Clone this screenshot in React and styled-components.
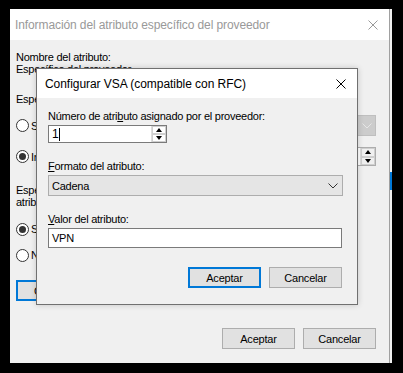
import React from "react";
import styled, { createGlobalStyle } from "styled-components";

const Global = createGlobalStyle`
  html, body { margin: 0; padding: 0; background: #000; }
  body { width: 403px; height: 373px; overflow: hidden; }
  * { box-sizing: border-box; }
`;

const UI = `"Liberation Sans", Arial, sans-serif`;

const Page = styled.div`
  display: flex;
  align-items: flex-start;
  padding: 9px 0 0 10px;
  height: 373px;
`;

const Window = styled.div`
  position: relative;
  width: 379px;
  height: 354px;
  background: #f0f0f0;
  display: flex;
  flex-direction: column;
`;

const EdgeStrip = styled.div`
  width: 3px;
  height: 354px;
  border-left: 1px solid #a0a0a0;
  background: #f0f0f0;
  display: flex;
  flex-direction: column;
`;

const EdgeMark = styled.div`
  margin-top: ${(p) => p.$top}px;
  height: ${(p) => p.$h}px;
  background: ${(p) => p.$color};
`;

const TitleBar = styled.div`
  height: ${(p) => p.$h}px;
  flex: none;
  background: #fff;
  display: flex;
  align-items: center;
  justify-content: space-between;
  padding-left: ${(p) => p.$pad}px;
  font-family: ${UI};
  font-size: 12px;
  letter-spacing: ${(p) => (p.$active ? "-0.05px" : "-0.1px")};
  color: ${(p) => (p.$active ? "#000" : "#999")};
`;

const CloseBox = styled.div`
  width: 32px;
  height: 100%;
  display: flex;
  align-items: center;
  justify-content: center;
`;

const Content = styled.div`
  flex: 1;
  display: flex;
  flex-direction: column;
  padding: 11px 13px 14px 6px;
  font-family: ${UI};
  font-size: 11px;
  letter-spacing: -0.25px;
  color: #000;
`;

const Lines = styled.div`
  line-height: 12px;
  margin-top: ${(p) => p.$mt || 0}px;
  white-space: nowrap;
`;

const OptionRow = styled.div`
  display: flex;
  align-items: center;
  height: ${(p) => p.$h}px;
  margin-top: ${(p) => p.$mt}px;
  white-space: nowrap;
`;

const Radio = styled.span`
  width: 13px;
  height: 13px;
  border-radius: 50%;
  border: 1px solid #333;
  background: #fff;
  display: inline-flex;
  align-items: center;
  justify-content: center;
  margin-right: 2px;
  flex: none;
  &::after {
    content: "";
    width: 7px;
    height: 7px;
    border-radius: 50%;
    background: ${(p) => (p.$checked ? "#333" : "transparent")};
  }
`;

const DisabledCombo = styled.div`
  margin-left: auto;
  width: 170px;
  height: 21px;
  background: #ccc;
  border: 1px solid #bfbfbf;
  display: flex;
  align-items: center;
  justify-content: flex-end;
  padding-right: 3px;
`;

const SmallSpin = styled.div`
  margin-left: auto;
  width: 120px;
  height: 19px;
  background: #fff;
  border: 1px solid #adadad;
  display: flex;
  justify-content: flex-end;
`;

const SpinCol = styled.div`
  width: 15px;
  display: flex;
  flex-direction: column;
  border-left: 1px solid #ddd;
`;

const SpinBtn = styled.div`
  flex: 1;
  display: flex;
  align-items: center;
  justify-content: center;
  background: ${(p) => p.$bg || "#f0f0f0"};
  border: 1px solid #cfcfcf;
`;

const Arrow = styled.span`
  width: 0;
  height: 0;
  border-left: 3.5px solid transparent;
  border-right: 3.5px solid transparent;
  ${(p) => (p.$up ? "border-bottom: 4px solid #000;" : "border-top: 4px solid #000;")}
`;

const Button = styled.div`
  width: ${(p) => p.$w || 73}px;
  height: 21px;
  background: #e1e1e1;
  border: ${(p) => (p.$default ? "2px solid #0078d7" : "1px solid #adadad")};
  display: flex;
  align-items: center;
  justify-content: ${(p) => (p.$left ? "flex-start" : "center")};
  padding-left: ${(p) => (p.$left ? 16 : 0)}px;
  font-family: ${UI};
  font-size: 11px;
  letter-spacing: -0.2px;
  color: #000;
  white-space: nowrap;
  margin-top: ${(p) => p.$mt || 0}px;
`;

const Footer = styled.div`
  margin-top: auto;
  display: flex;
  justify-content: flex-end;
  gap: 8px;
`;

const Dialog = styled.div`
  position: absolute;
  left: 26px;
  top: 59px;
  width: 322px;
  height: 237px;
  border: 1px solid #707070;
  background: #f0f0f0;
  display: flex;
  flex-direction: column;
  box-shadow: 0 0 6px rgba(0, 0, 0, 0.18);
`;

const DialogBody = styled.div`
  flex: 1;
  display: flex;
  flex-direction: column;
  padding: 11px 14px 0 11px;
  font-family: ${UI};
  font-size: 11px;
  letter-spacing: -0.25px;
  color: #000;
`;

const FieldLabel = styled.div`
  line-height: 15px;
  margin-top: ${(p) => p.$mt || 0}px;
  white-space: nowrap;
`;

const Key = styled.span`
  text-decoration: underline;
`;

const SpinField = styled.div`
  margin-top: 1px;
  width: 119px;
  height: 18px;
  display: flex;
  border: 1px solid #7a7a7a;
  background: #fff;
`;

const SpinText = styled.div`
  flex: 1;
  display: flex;
  align-items: center;
  padding-left: 3px;
  font-size: 12px;
`;

const Caret = styled.span`
  display: inline-block;
  width: 1px;
  height: 13px;
  background: #000;
  margin-left: 1px;
`;

const Combo = styled.div`
  margin-top: 1px;
  width: 295px;
  height: 21px;
  background: #e5e5e5;
  border: 1px solid #adadad;
  display: flex;
  align-items: center;
  justify-content: space-between;
  padding: 0 4px 0 3px;
`;

const TextBox = styled.div`
  margin-top: 1px;
  width: 294px;
  height: 20px;
  background: #fff;
  border: 1px solid #7a7a7a;
  display: flex;
  align-items: center;
  padding-left: 3px;
`;

const ButtonRow = styled.div`
  margin-top: 19px;
  display: flex;
  justify-content: flex-end;
  gap: 8px;
  padding-right: 1px;
`;

const XIcon = ({ color, size = 10 }) => (
  <svg width={size} height={size} viewBox="0 0 10 10">
    <path d="M0.5 0.5L9.5 9.5M9.5 0.5L0.5 9.5" stroke={color} strokeWidth="1" fill="none" />
  </svg>
);

const Chevron = ({ color }) => (
  <svg width="10" height="6" viewBox="0 0 10 6">
    <path d="M0.5 0.5L5 5L9.5 0.5" stroke={color} strokeWidth="1" fill="none" />
  </svg>
);

export default function App() {
  return (
    <>
      <Global />
      <Page>
        <Window>
          <TitleBar $h={31} $pad={5}>
            Información del atributo específico del proveedor
            <CloseBox>
              <XIcon color="#999" />
            </CloseBox>
          </TitleBar>
          <Content>
            <Lines>
              Nombre del atributo:
              <br />
              Específico del proveedor
            </Lines>
            <Lines $mt={18}>Especificar el proveedor de acceso a la red:</Lines>
            <OptionRow $h={21} $mt={10}>
              <Radio />
              Seleccionar en la lista:
              <DisabledCombo>
                <Chevron color="#e6e6e6" />
              </DisabledCombo>
            </OptionRow>
            <OptionRow $h={19} $mt={11}>
              <Radio $checked />
              Introducir código de proveedor:
              <SmallSpin>
                <SpinCol>
                  <SpinBtn>
                    <Arrow $up />
                  </SpinBtn>
                  <SpinBtn>
                    <Arrow />
                  </SpinBtn>
                </SpinCol>
              </SmallSpin>
            </OptionRow>
            <Lines $mt={18}>
              Especifique si el atributo cumple con la especificación RFC
              <br />
              atributos específicos del proveedor:
            </Lines>
            <OptionRow $h={20} $mt={11}>
              <Radio $checked />
              Sí. Es compatible
            </OptionRow>
            <OptionRow $h={20} $mt={6}>
              <Radio />
              No. No es compatible
            </OptionRow>
            <Button $default $left $w={130} $mt={15}>
              Configurar atributo...
            </Button>
            <Footer>
              <Button>Aceptar</Button>
              <Button>Cancelar</Button>
            </Footer>
          </Content>

          <Dialog>
            <TitleBar $h={29} $pad={8} $active>
              Configurar VSA (compatible con RFC)
              <CloseBox>
                <XIcon color="#000" />
              </CloseBox>
            </TitleBar>
            <DialogBody>
              <FieldLabel>
                Número de atri<Key>b</Key>uto asignado por el proveedor:
              </FieldLabel>
              <SpinField>
                <SpinText>
                  1<Caret />
                </SpinText>
                <SpinCol>
                  <SpinBtn $bg="#fff">
                    <Arrow $up />
                  </SpinBtn>
                  <SpinBtn $bg="#fff">
                    <Arrow />
                  </SpinBtn>
                </SpinCol>
              </SpinField>
              <FieldLabel $mt={16}>
                <Key>F</Key>ormato del atributo:
              </FieldLabel>
              <Combo>
                Cadena
                <Chevron color="#333" />
              </Combo>
              <FieldLabel $mt={16}>
                <Key>V</Key>alor del atributo:
              </FieldLabel>
              <TextBox>VPN</TextBox>
              <ButtonRow>
                <Button $default>Aceptar</Button>
                <Button>Cancelar</Button>
              </ButtonRow>
            </DialogBody>
          </Dialog>
        </Window>
        <EdgeStrip>
          <EdgeMark $top={163} $h={18} $color="#0078d7" />
        </EdgeStrip>
      </Page>
    </>
  );
}
